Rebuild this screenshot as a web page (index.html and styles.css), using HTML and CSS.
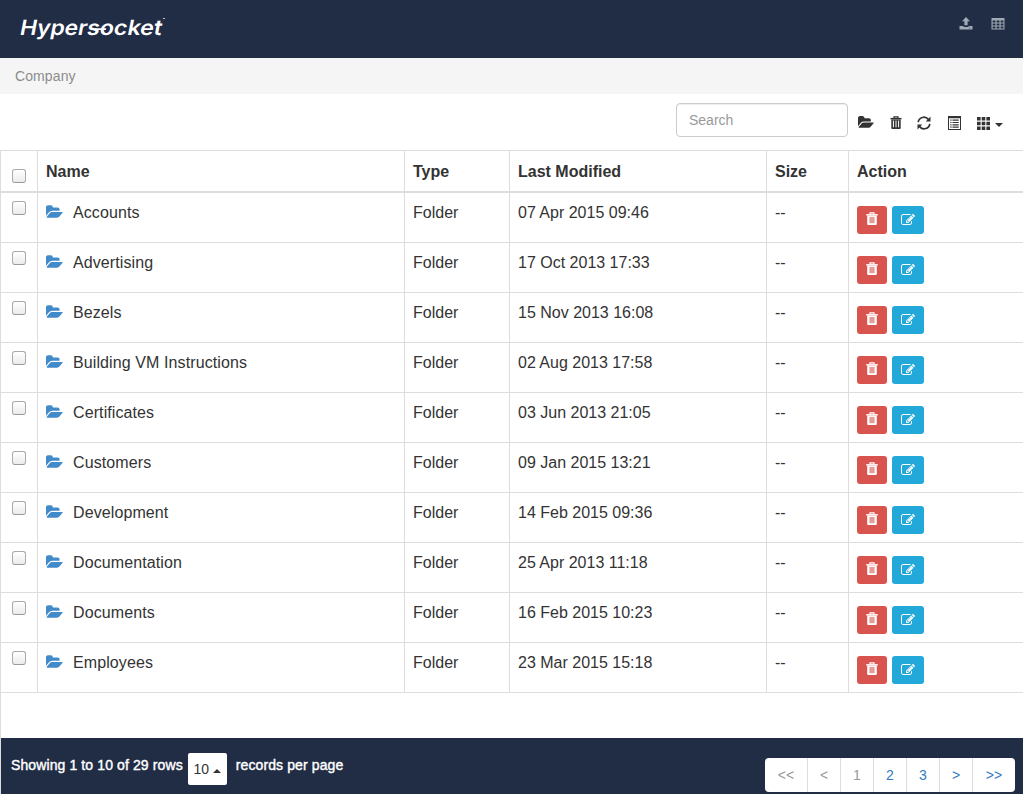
FILE: index.html
```
<!DOCTYPE html>
<html lang="en">
<head>
<meta charset="utf-8">
<title>Hypersocket</title>
<link rel="stylesheet" href="styles.css">
</head>
<body>
<svg class="sprite" aria-hidden="true">
  <symbol id="folder" viewBox="0 0 1920 1792"><path d="M1879 952q0 31-31 66l-336 396q-43 51-120.500 86.500t-143.500 35.500h-1088q-34 0-60.500-13t-26.500-43q0-31 31-66l336-396q43-51 120.500-86.500t143.500-35.500h1088q34 0 60.500 13t26.500 43zm-343-344v160h-832q-94 0-197 47.500t-164 119.500l-337 396-5 6q0-4-.5-12.500t-.5-12.500v-960q0-92 66-158t158-66h320q92 0 158 66t66 158v32h544q92 0 158 66t66 158z"/></symbol>
  <symbol id="edit" viewBox="0 0 1792 1792"><path d="M888 1184l116-116-152-152-116 116v56h96v96h56zm440-720q-16-16-33 1l-350 350q-17 17-1 33t33-1l350-350q17-17 1-33zm80 594v190q0 119-84.500 203.500t-203.500 84.500h-832q-119 0-203.500-84.500t-84.500-203.500v-832q0-119 84.500-203.500t203.500-84.500h832q63 0 117 25 15 7 18 23 3 17-9 29l-49 49q-14 14-32 8-23-6-45-6h-832q-66 0-113 47t-47 113v832q0 66 47 113t113 47h832q66 0 113-47t47-113v-126q0-13 9-22l64-64q15-15 35-7t20 29zm-96-738l288 288-672 672h-288v-288zm444 132l-92 92-288-288 92-92q28-28 68-28t68 28l152 152q28 28 28 68t-28 68z"/></symbol>
  <symbol id="trash" viewBox="0 0 12 13"><path fill="none" stroke="currentColor" stroke-width="1.200" d="M4 2V.9h4V2"/><path d="M.5 1.900h11v1.500H.5z"/><path fill-rule="evenodd" d="M1.300 3.400h9.400V12q0 1-1 1H2.300q-1 0-1-1zM2.900 4.400v6.800h1V4.400zm2.600 0v6.800h1V4.400zm2.600 0v6.800h1V4.400z"/></symbol>
  <symbol id="trash-soft" viewBox="0 0 12 13"><path fill="none" stroke="currentColor" stroke-width="1.200" d="M4 2V.9h4V2"/><path d="M.2 2.100h11.600v1.400H.2z"/><path d="M1.200 3.400h9.600V12q0 1-1 1H2.200q-1 0-1-1z"/><path fill="#e59c98" d="M3.400 4.900h5.200v6.300H3.400z"/></symbol>
</svg>

<header class="topbar">
  <svg class="logo" viewBox="0 0 170 44" role="img" aria-label="Hypersocket"><g transform="translate(0 30) skewX(-11)"><text class="logo-text" y="0"><tspan x="0" textLength="67" lengthAdjust="spacingAndGlyphs">Hyper</tspan><tspan x="67" textLength="75" lengthAdjust="spacingAndGlyphs">socket</tspan></text><path d="M73 -5.800h13" stroke="#fff" stroke-width="1.800"/></g><path d="M144 13.500h2" stroke="#b9c1cd" stroke-width="1"/></svg>
  <nav class="top-icons">
    <svg width="14" height="13" viewBox="0 0 14 13"><path d="M7 0l4 4.200H8.600v4H5.400v-4H3z"/><path d="M.5 9h4v1h5V9h4v3.500H.5z"/><path d="M10 10.500h1v1h-1z" fill="#4a5569"/></svg>
    <svg width="14" height="13" viewBox="0 0 14 13"><path fill-rule="evenodd" d="M.5 1h13v11.500H.5zM1.600 3.400v2h2.900v-2zm4 0v2h2.900v-2zm4 0v2h2.900v-2zM1.600 6.400v2h2.900v-2zm4 0v2h2.900v-2zm4 0v2h2.900v-2zM1.600 9.400v2h2.900v-2zm4 0v2h2.900v-2zm4 0v2h2.900v-2z"/></svg>
  </nav>
</header>

<div class="breadcrumb">Company</div>

<main class="content">
  <div class="toolbar">
    <input class="search" type="text" placeholder="Search" aria-label="Search">
    <div class="tools">
      <svg class="tool-folder" width="16" height="15"><use href="#folder"/></svg>
      <svg class="tool-trash" width="12" height="13"><use href="#trash"/></svg>
      <svg class="tool-refresh" width="14" height="14" viewBox="0 0 14 14"><path fill="none" stroke="currentColor" stroke-width="1.700" d="M1.200 6.200A5.700 5.700 0 0 1 11.300 3.400M12.800 7.800A5.700 5.700 0 0 1 2.700 10.600"/><path d="M13.500 .6v4.800H8.800zM.5 13.400V8.600h4.700z"/></svg>
      <svg class="tool-list" width="13" height="14" viewBox="0 0 13 14"><path fill-rule="evenodd" d="M0 0h13v14H0zM1 2.200V13h11V2.200z"/><path d="M2.300 3.600h1.300v1.200H2.300zm2.200 0h6.200v1.200H4.500zM2.300 5.900h1.300v1.200H2.300zm2.200 0h6.200v1.200H4.500zM2.300 8.200h1.300v1.200H2.300zm2.200 0h6.200v1.200H4.500zM2.300 10.500h1.300v1.200H2.300zm2.200 0h6.200v1.200H4.500z"/></svg>
      <svg class="tool-grid" width="13" height="13" viewBox="0 0 13 13"><path d="M0 0h3.600v3.400H0zm4.700 0h3.600v3.400H4.700zm4.700 0H13v3.400H9.400zM0 4.800h3.600v3.400H0zm4.700 0h3.600v3.400H4.700zm4.700 0H13v3.400H9.400zM0 9.600h3.600V13H0zm4.700 0h3.600V13H4.700zm4.700 0H13V13H9.400z"/></svg>
      <span class="caret"></span>
    </div>
  </div>

  <table class="files">
    <colgroup><col class="c-check"><col class="c-name"><col class="c-type"><col class="c-date"><col class="c-size"><col></colgroup>
    <thead>
      <tr><th><input class="check" type="checkbox" aria-label="Select all"></th><th>Name</th><th>Type</th><th>Last Modified</th><th>Size</th><th>Action</th></tr>
    </thead>
    <tbody>
      <tr><td><input class="check" type="checkbox"></td><td><div class="name"><svg class="folder"><use href="#folder"/></svg>Accounts</div></td><td>Folder</td><td>07 Apr 2015 09:46</td><td>--</td><td><div class="actions"><button class="btn del"><svg><use href="#trash-soft"/></svg></button><button class="btn edit"><svg><use href="#edit"/></svg></button></div></td></tr>
      <tr><td><input class="check" type="checkbox"></td><td><div class="name"><svg class="folder"><use href="#folder"/></svg>Advertising</div></td><td>Folder</td><td>17 Oct 2013 17:33</td><td>--</td><td><div class="actions"><button class="btn del"><svg><use href="#trash-soft"/></svg></button><button class="btn edit"><svg><use href="#edit"/></svg></button></div></td></tr>
      <tr><td><input class="check" type="checkbox"></td><td><div class="name"><svg class="folder"><use href="#folder"/></svg>Bezels</div></td><td>Folder</td><td>15 Nov 2013 16:08</td><td>--</td><td><div class="actions"><button class="btn del"><svg><use href="#trash-soft"/></svg></button><button class="btn edit"><svg><use href="#edit"/></svg></button></div></td></tr>
      <tr><td><input class="check" type="checkbox"></td><td><div class="name"><svg class="folder"><use href="#folder"/></svg>Building VM Instructions</div></td><td>Folder</td><td>02 Aug 2013 17:58</td><td>--</td><td><div class="actions"><button class="btn del"><svg><use href="#trash-soft"/></svg></button><button class="btn edit"><svg><use href="#edit"/></svg></button></div></td></tr>
      <tr><td><input class="check" type="checkbox"></td><td><div class="name"><svg class="folder"><use href="#folder"/></svg>Certificates</div></td><td>Folder</td><td>03 Jun 2013 21:05</td><td>--</td><td><div class="actions"><button class="btn del"><svg><use href="#trash-soft"/></svg></button><button class="btn edit"><svg><use href="#edit"/></svg></button></div></td></tr>
      <tr><td><input class="check" type="checkbox"></td><td><div class="name"><svg class="folder"><use href="#folder"/></svg>Customers</div></td><td>Folder</td><td>09 Jan 2015 13:21</td><td>--</td><td><div class="actions"><button class="btn del"><svg><use href="#trash-soft"/></svg></button><button class="btn edit"><svg><use href="#edit"/></svg></button></div></td></tr>
      <tr><td><input class="check" type="checkbox"></td><td><div class="name"><svg class="folder"><use href="#folder"/></svg>Development</div></td><td>Folder</td><td>14 Feb 2015 09:36</td><td>--</td><td><div class="actions"><button class="btn del"><svg><use href="#trash-soft"/></svg></button><button class="btn edit"><svg><use href="#edit"/></svg></button></div></td></tr>
      <tr><td><input class="check" type="checkbox"></td><td><div class="name"><svg class="folder"><use href="#folder"/></svg>Documentation</div></td><td>Folder</td><td>25 Apr 2013 11:18</td><td>--</td><td><div class="actions"><button class="btn del"><svg><use href="#trash-soft"/></svg></button><button class="btn edit"><svg><use href="#edit"/></svg></button></div></td></tr>
      <tr><td><input class="check" type="checkbox"></td><td><div class="name"><svg class="folder"><use href="#folder"/></svg>Documents</div></td><td>Folder</td><td>16 Feb 2015 10:23</td><td>--</td><td><div class="actions"><button class="btn del"><svg><use href="#trash-soft"/></svg></button><button class="btn edit"><svg><use href="#edit"/></svg></button></div></td></tr>
      <tr><td><input class="check" type="checkbox"></td><td><div class="name"><svg class="folder"><use href="#folder"/></svg>Employees</div></td><td>Folder</td><td>23 Mar 2015 15:18</td><td>--</td><td><div class="actions"><button class="btn del"><svg><use href="#trash-soft"/></svg></button><button class="btn edit"><svg><use href="#edit"/></svg></button></div></td></tr>
    </tbody>
  </table>
  <div class="spacer"></div>
</main>

<footer class="footer">
  <div class="summary">
    <span class="summary-text">Showing 1 to 10 of 29 rows</span>
    <button class="page-size">10<span class="caret up"></span></button>
    <span class="summary-text">records per page</span>
  </div>
  <nav class="pages">
    <a class="off wide">&lt;&lt;</a><a class="off">&lt;</a><a class="off">1</a><a>2</a><a>3</a><a>&gt;</a><a class="wide">&gt;&gt;</a>
  </nav>
</footer>
</body>
</html>
```
FILE: styles.css
```
* { box-sizing: border-box; }
body {
  margin: 0;
  width: 1023px;
  height: 794px;
  overflow: hidden;
  display: flex;
  flex-direction: column;
  background: #fff;
  color: #333;
  font: 16px/20px "Liberation Sans", Arial, sans-serif;
}
svg { display: block; fill: currentColor; flex: none; }
.sprite { display: none; }

.topbar {
  height: 58px;
  flex: none;
  display: flex;
  justify-content: space-between;
  background: #212c45;
  padding: 5px 18px 0 19px;
}
.logo { width: 170px; height: 44px; overflow: visible; }
.logo-text {
  font: 600 21px Inter, sans-serif;
  fill: #fff;
}
.top-icons { display: flex; gap: 18px; padding-top: 12px; color: #a0aab5; }

.breadcrumb {
  height: 36px;
  flex: none;
  padding: 8px 15px;
  background: #f5f5f5;
  color: #8c8c8c;
  font-size: 14px;
  letter-spacing: 0.1px;
}

.content { flex: none; }
.toolbar {
  height: 56px;
  display: flex;
  justify-content: flex-end;
  padding: 9px 20px 0 0;
}
.search {
  width: 172px;
  height: 34px;
  border: 1px solid #ccc;
  border-radius: 4px;
  padding: 0 12px;
  background: #fff;
  font: 14px "Liberation Sans", Arial, sans-serif;
  box-shadow: inset 0 1px 1px rgba(0, 0, 0, 0.075);
}
.search::placeholder { color: #999; opacity: 1; }
.tools {
  height: 34px;
  display: flex;
  align-items: center;
  padding: 6px 0 0 10px;
  color: #333;
}
.tool-folder { margin: -1px 16px 0 0; }
.tool-trash { margin: -2px 15px 0 0; }
.tool-refresh { margin-right: 17px; }
.tool-list { margin-right: 16px; }
.tool-grid { margin-right: 5px; }
.caret {
  width: 0;
  height: 0;
  border: 4px solid transparent;
  border-top-color: #333;
  border-bottom: 0;
  margin-top: 3px;
}

.files {
  width: 100%;
  table-layout: fixed;
  border-spacing: 0;
  border-top: 1px solid #ddd;
  border-left: 1px solid #ddd;
}
.c-check { width: 37px; }
.c-name { width: 367px; }
.c-type { width: 105px; }
.c-date { width: 257px; }
.c-size { width: 82px; }
.files th,
.files td {
  border-right: 1px solid #ddd;
  border-bottom: 1px solid #ddd;
  padding: 0 8px;
  text-align: left;
  vertical-align: top;
}
.files th:last-child,
.files td:last-child { border-right: 0; }
.files th { height: 42px; padding-top: 11px; border-bottom-width: 2px; }
.files td { height: 50px; padding-top: 10px; }
.files th:first-child { padding: 18px 0 0 11px; }
.files td:first-child { padding: 8px 0 0 11px; }
.check {
  display: block;
  appearance: none;
  width: 14px;
  height: 14px;
  margin: 0;
  border: 1px solid #aaa;
  border-bottom-color: #999;
  border-radius: 3px;
  background: linear-gradient(#fff, #ececec);
}
.name { display: flex; gap: 10px; letter-spacing: 0.1px; }
.folder { width: 17px; height: 16px; margin-top: 1px; color: #428bca; }
.actions { display: flex; gap: 5px; padding-top: 3px; }
.btn {
  display: flex;
  align-items: center;
  justify-content: center;
  height: 28px;
  padding: 0;
  border: 0;
  border-radius: 3px;
  color: #fff;
}
.del { width: 30px; background: #d9534f; }
.del svg { width: 12px; height: 13px; margin-top: -3px; }
.edit { width: 32px; background: #22a9da; }
.edit svg { width: 14px; height: 14px; }

.spacer { height: 45px; border-left: 1px solid #ddd; }
.footer {
  flex: 1;
  display: flex;
  justify-content: space-between;
  background: #212c45;
  border-left: 1px solid #ddd;
  padding: 0 8px 0 10px;
}
.summary { display: flex; align-items: flex-start; padding-top: 15px; }
.summary-text {
  margin-top: 2px;
  color: #fff;
  font-size: 14px;
  letter-spacing: 0.11px;
  -webkit-text-stroke: 0.4px #fff;
}
.page-size {
  width: 39px;
  height: 32px;
  margin: 0 9px 0 5px;
  display: flex;
  align-items: center;
  justify-content: center;
  gap: 4px;
  border: 0;
  border-radius: 2px;
  padding: 0;
  background: #fff;
  color: #333;
  font: 14px "Liberation Sans", Arial, sans-serif;
}
.caret.up { border-top: 0; border-bottom: 4px solid #333; }
.pages {
  display: flex;
  height: 34px;
  margin-top: 20px;
  border-radius: 4px;
  background: #fff;
  font-size: 14px;
  line-height: 35px;
  text-align: center;
}
.pages a { width: 33px; border-right: 1px solid #ddd; color: #337ac5; }
.pages .wide { width: 42px; }
.pages .wide:first-child { width: 43px; }
.pages a:last-child { border-right: 0; }
.pages .off { color: #999; }
```
